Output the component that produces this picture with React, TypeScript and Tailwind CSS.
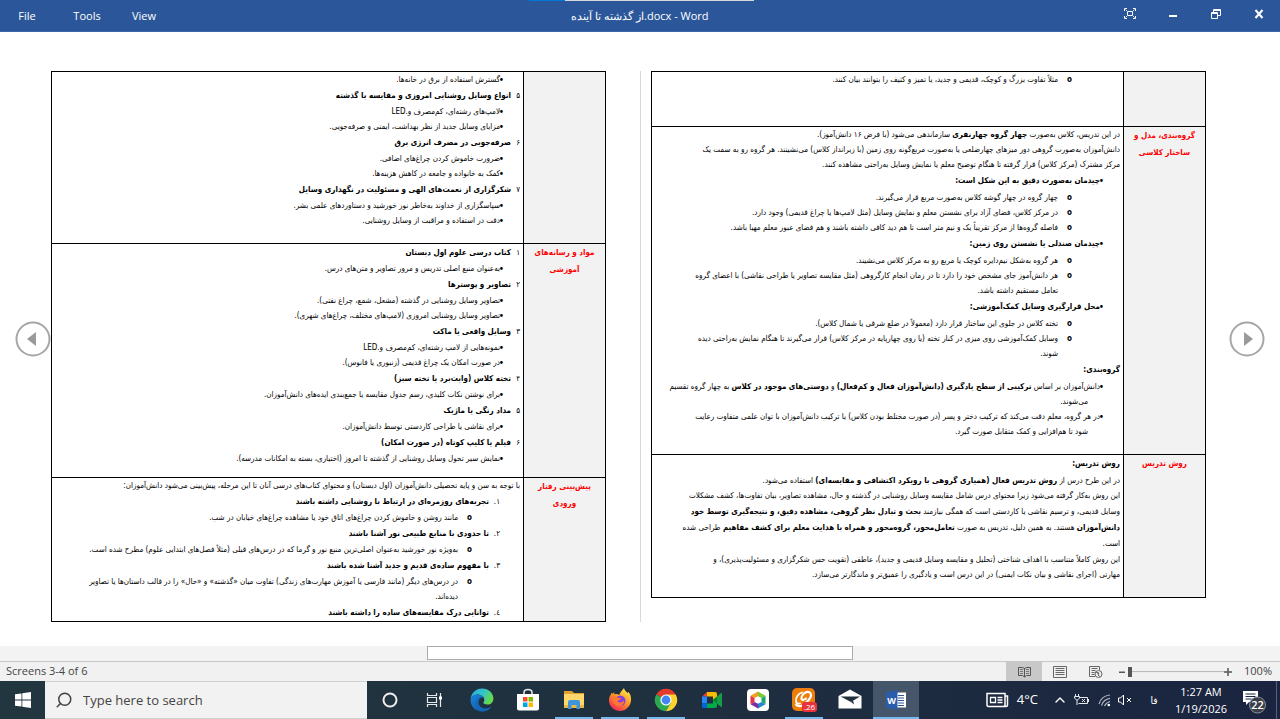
import React from 'react';
import { ChevronUp, Search } from 'lucide-react';

type Kind = 'text' | 'head' | 'number' | 'bullet' | 'circle' | 'ordered';

interface Line {
  kind: Kind;
  marker?: string;
  body: React.ReactNode;
  bold?: boolean;
  loose?: boolean;
}

interface Section {
  title: string[];
  lines: Line[];
  pad: string;
}

const head = (body: React.ReactNode): Line => ({ kind: 'head', body, bold: true });
const text = (body: React.ReactNode, loose = false): Line => ({ kind: 'text', body, loose });
const num = (marker: string, body: React.ReactNode): Line => ({ kind: 'number', marker, body, bold: true });
const ordered = (marker: string, body: React.ReactNode): Line => ({ kind: 'ordered', marker, body, bold: true });
const bullet = (body: React.ReactNode, bold = false): Line => ({ kind: 'bullet', marker: '•', body, bold });
const circle = (body: React.ReactNode): Line => ({ kind: 'circle', marker: 'o', body });

const leftPage: Section[] = [
  {
    title: [],
    pad: 'pb-[15px]',
    lines: [
      bullet('گسترش استفاده از برق در خانه‌ها.'),
      num('۵', 'انواع وسایل روشنایی امروزی و مقایسه با گذشته'),
      bullet('لامپ‌های رشته‌ای، کم‌مصرف و.LED'),
      bullet('مزایای وسایل جدید از نظر بهداشت، ایمنی و صرفه‌جویی.'),
      num('۶', 'صرفه‌جویی در مصرف انرژی برق'),
      bullet('ضرورت خاموش کردن چراغ‌های اضافی.'),
      bullet('کمک به خانواده و جامعه در کاهش هزینه‌ها.'),
      num('۷', 'شکرگزاری از نعمت‌های الهی و مسئولیت در نگهداری وسایل'),
      bullet('سپاسگزاری از خداوند به‌خاطر نور خورشید و دستاوردهای علمی بشر.'),
      bullet('دقت در استفاده و مراقبت از وسایل روشنایی.'),
    ],
  },
  {
    title: ['مواد و رسانه‌های', 'آموزشی'],
    pad: 'pb-[11px]',
    lines: [
      num('۱', 'کتاب درسی علوم اول دبستان'),
      bullet('به‌عنوان منبع اصلی تدریس و مرور تصاویر و متن‌های درس.'),
      num('۲', 'تصاویر و پوسترها'),
      bullet('تصاویر وسایل روشنایی در گذشته (مشعل، شمع، چراغ نفتی).'),
      bullet('تصاویر وسایل روشنایی امروزی (لامپ‌های مختلف، چراغ‌های شهری).'),
      num('۳', 'وسایل واقعی یا ماکت'),
      bullet('نمونه‌هایی از لامپ رشته‌ای، کم‌مصرف و.LED'),
      bullet('در صورت امکان یک چراغ قدیمی (زنبوری یا فانوس).'),
      num('۴', 'تخته کلاس (وایت‌برد یا تخته سبز)'),
      bullet('برای نوشتن نکات کلیدی، رسم جدول مقایسه یا جمع‌بندی ایده‌های دانش‌آموزان.'),
      num('۵', 'مداد رنگی یا ماژیک'),
      bullet('برای نقاشی یا طراحی کاردستی توسط دانش‌آموزان.'),
      num('۶', 'فیلم یا کلیپ کوتاه (در صورت امکان)'),
      bullet('نمایش سیر تحول وسایل روشنایی از گذشته تا امروز (اختیاری، بسته به امکانات مدرسه).'),
    ],
  },
  {
    title: ['پیش‌بینی رفتار', 'ورودی'],
    pad: 'pb-0',
    lines: [
      text('با توجه به سن و پایه تحصیلی دانش‌آموزان (اول دبستان) و محتوای کتاب‌های درسی آنان تا این مرحله، پیش‌بینی می‌شود دانش‌آموزان:'),
      ordered('۱.', 'تجربه‌های روزمره‌ای در ارتباط با روشنایی داشته باشند'),
      circle('مانند روشن و خاموش کردن چراغ‌های اتاق خود یا مشاهده چراغ‌های خیابان در شب.'),
      ordered('۲.', 'تا حدودی با منابع طبیعی نور آشنا باشند'),
      circle('به‌ویژه نور خورشید به‌عنوان اصلی‌ترین منبع نور و گرما که در درس‌های قبلی (مثلاً فصل‌های ابتدایی علوم) مطرح شده است.'),
      ordered('۳.', 'با مفهوم ساده‌ی قدیم و جدید آشنا شده باشند'),
      circle(<>در درس‌های دیگر (مانند فارسی یا آموزش مهارت‌های زندگی) تفاوت میان «گذشته» و «حال» را در قالب داستان‌ها یا تصاویر<br />دیده‌اند.</>),
      ordered('٤.', 'توانایی درک مقایسه‌های ساده را داشته باشند'),
    ],
  },
];

const rightPage: Section[] = [
  {
    title: [],
    pad: 'pb-[39px]',
    lines: [circle('مثلاً تفاوت بزرگ و کوچک، قدیمی و جدید، یا تمیز و کثیف را بتوانند بیان کنند.')],
  },
  {
    title: ['گروه‌بندی، مدل و', 'ساختار کلاسی'],
    pad: 'pb-[15px]',
    lines: [
      text(<>در این تدریس، کلاس به‌صورت <b>چهار گروه چهارنفری</b> سازماندهی می‌شود (با فرض ۱۶ دانش‌آموز).</>),
      text(<>دانش‌آموزان به‌صورت گروهی دور میزهای چهارضلعی یا به‌صورت مربع‌گونه روی زمین (با زیرانداز کلاس) می‌نشینند. هر گروه رو به سمت یک<br />مرکز مشترک (مرکز کلاس) قرار گرفته تا هنگام توضیح معلم یا نمایش وسایل به‌راحتی مشاهده کنند.</>),
      bullet('چیدمان به‌صورت دقیق به این شکل است:', true),
      circle('چهار گروه در چهار گوشه کلاس به‌صورت مربع قرار می‌گیرند.'),
      circle('در مرکز کلاس، فضای آزاد برای نشستن معلم و نمایش وسایل (مثل لامپ‌ها یا چراغ قدیمی) وجود دارد.'),
      circle('فاصله گروه‌ها از مرکز تقریباً یک و نیم متر است تا هم دید کافی داشته باشند و هم فضای عبور معلم مهیا باشد.'),
      bullet('چیدمان صندلی یا نشستن روی زمین:', true),
      circle('هر گروه به‌شکل نیم‌دایره کوچک یا مربع رو به مرکز کلاس می‌نشیند.'),
      circle(<>هر دانش‌آموز جای مشخص خود را دارد تا در زمان انجام کارگروهی (مثل مقایسه تصاویر یا طراحی نقاشی) با اعضای گروه<br />تعامل مستقیم داشته باشد.</>),
      bullet('محل قرارگیری وسایل کمک‌آموزشی:', true),
      circle('تخته کلاس در جلوی این ساختار قرار دارد (معمولاً در ضلع شرقی یا شمال کلاس).'),
      circle(<>وسایل کمک‌آموزشی روی میزی در کنار تخته (یا روی چهارپایه در مرکز کلاس) قرار می‌گیرند تا هنگام نمایش به‌راحتی دیده<br />شوند.</>),
      head('گروه‌بندی:'),
      bullet(<>دانش‌آموزان بر اساس <b>ترکیبی از سطح یادگیری (دانش‌آموزان فعال و کم‌فعال)</b> و <b>دوستی‌های موجود در کلاس</b> به چهار گروه تقسیم<br /><span className="pe-3" />می‌شوند.</>),
      bullet(<>در هر گروه، معلم دقت می‌کند که ترکیب دختر و پسر (در صورت مختلط بودن کلاس) یا ترکیب دانش‌آموزان با توان علمی متفاوت رعایت<br /><span className="pe-3" />شود تا هم‌افزایی و کمک متقابل صورت گیرد.</>),
    ],
  },
  {
    title: ['روش تدریس'],
    pad: 'pb-[15px]',
    lines: [
      head('روش تدریس:'),
      text(<>در این طرح درس از <b>روش تدریس فعال (همیاری گروهی با رویکرد اکتشافی و مقایسه‌ای)</b> استفاده می‌شود.</>),
      text(<>این روش به‌کار گرفته می‌شود زیرا محتوای درس شامل مقایسه وسایل روشنایی در گذشته و حال، مشاهده تصاویر، بیان تفاوت‌ها، کشف مشکلات<br />وسایل قدیمی، و ترسیم نقاشی یا کاردستی است که همگی نیازمند <b>بحث و تبادل نظر گروهی، مشاهده دقیق، و نتیجه‌گیری توسط خود<br />دانش‌آموزان</b> هستند. به همین دلیل، تدریس به صورت <b>تعامل‌محور، گروه‌محور و همراه با هدایت معلم برای کشف مفاهیم</b> طراحی شده<br />است.</>, true),
      text(<>این روش کاملاً متناسب با اهداف شناختی (تحلیل و مقایسه وسایل قدیمی و جدید)، عاطفی (تقویت حس شکرگزاری و مسئولیت‌پذیری)، و<br />مهارتی (اجرای نقاشی و بیان نکات ایمنی) در این درس است و یادگیری را عمیق‌تر و ماندگارتر می‌سازد.</>),
    ],
  },
];

const indent: Record<Kind, string> = {
  text: '',
  head: '',
  number: '',
  bullet: 'ps-4',
  ordered: 'ps-5',
  circle: 'ps-12',
};

const markerStyle: Record<Kind, string> = {
  text: 'hidden',
  head: 'hidden',
  number: 'w-[9px] font-normal',
  bullet: 'w-1 text-[10px] font-normal',
  ordered: 'w-[11px] font-normal text-[8px]',
  circle: 'w-[14px] text-[8px] font-bold',
};

const DocLine: React.FC<{ line: Line; headLeading: string }> = ({ line, headLeading }) => {
  const leading = line.bold ? headLeading : line.loose ? 'leading-[16px]' : 'leading-[15px]';
  return (
    <div className={`flex whitespace-nowrap ${indent[line.kind]} ${leading} ${line.bold ? 'font-bold' : ''}`}>
      <span className={`shrink-0 ${markerStyle[line.kind]} ${leading}`}>{line.marker}</span>
      <p>{line.body}</p>
    </div>
  );
};

const Page: React.FC<{ sections: Section[]; headLeading: string }> = ({ sections, headLeading }) => (
  <table
    dir="rtl"
    className="w-full table-fixed border-collapse border border-black font-['DejaVu_Sans_Condensed','DejaVu_Sans',sans-serif] text-[8px] text-black"
  >
    <colgroup>
      <col className="w-[82px]" />
      <col />
    </colgroup>
    <tbody>
      {sections.map((s, i) => (
        <tr key={i}>
          <th className="border border-black bg-[#f2f2f2] p-0 text-center align-top text-[8px] leading-[17px] font-bold text-[#ff0000]">
            {s.title.map(t => <div key={t}>{t}</div>)}
          </th>
          <td className={`border border-black p-0 ps-[3px] align-top ${s.pad}`}>
            {s.lines.map((l, j) => <DocLine key={j} line={l} headLeading={headLeading} />)}
          </td>
        </tr>
      ))}
    </tbody>
  </table>
);

const PageButton: React.FC<{ label: string; d: string }> = ({ label, d }) => (
  <button aria-label={label} className="shrink-0 self-center">
    <svg width="36" height="36" viewBox="0 0 36 36">
      <circle cx="18" cy="18" r="16.5" fill="#fff" stroke="#a6a6a6" strokeWidth="2" />
      <path d={d} fill="#9a9a9a" />
    </svg>
  </button>
);

const TitleBar = () => (
  <header className="grid h-8 shrink-0 grid-cols-[1fr_auto_1fr] items-center border-b border-[#3f68a8] bg-[#2b579a] font-['Open_Sans',sans-serif] text-[11px] text-white">
    <nav className="flex h-full items-center pt-px">
      <button className="w-[54px] text-center">File</button>
      <button className="w-[66px] text-center">Tools</button>
      <button className="w-12 text-center">View</button>
    </nav>
    <div className="relative flex h-full items-center pt-px">
      <div className="absolute top-0 -left-[42px] flex h-px w-[225px]">
        <span className="w-9 shrink-0 bg-[#0078d7]" />
        <span className="w-full bg-[#d5d9df]" />
      </div>
      <h1 dir="ltr"><bdi>از گذشته تا آینده</bdi>.docx - Word</h1>
    </div>
    <div className="flex h-full items-center justify-end pb-1">
      <button aria-label="Auto-hide reading toolbar" className="flex w-[43px] justify-center">
        <svg width="12" height="11" viewBox="0 0 12 11" fill="none" stroke="#fff">
          <path d="M.5 3V.5H3M9 .5h2.500V3M11.500 8v2.500H9M3 10.500H.5V8M3.500 3.500h5v4h-5z" />
          <path d="M1.500 1.500l1.500 1.500M10.500 1.500L9 3M1.500 9.500L3 8M10.500 9.500L9 8" strokeWidth=".8" />
        </svg>
      </button>
      <button aria-label="Minimize" className="flex w-[43px] justify-center">
        <svg width="10" height="10" viewBox="0 0 10 10"><path d="M1 6h8v2H1z" fill="#fff" /></svg>
      </button>
      <button aria-label="Restore" className="flex w-[43px] justify-center">
        <svg width="10" height="10" viewBox="0 0 10 10" fill="none" stroke="#fff">
          <path d="M.5 3.500h6v6h-6zM.5 4.500h6M2.500 3V.5h7v6H7M2.500 1.500h7" />
        </svg>
      </button>
      <button aria-label="Close" className="flex w-[43px] justify-center">
        <svg width="10" height="10" viewBox="0 0 10 10"><path d="M1.500 1l7 8M8.500 1l-7 8" stroke="#fff" strokeWidth="2" /></svg>
      </button>
    </div>
  </header>
);

const StatusBar = () => (
  <footer className="flex h-5 shrink-0 items-center border-t border-[#c6c6c6] bg-[#f1f1f1] font-['Open_Sans',sans-serif] text-[11px] text-[#444]">
    <span className="flex-1 ps-[6px]">Screens 3-4 of 6</span>
    <button aria-label="Read mode" className="flex h-full w-9 items-center justify-center bg-[#c8c8c8]">
      <svg width="13" height="12" viewBox="0 0 13 12" fill="none" stroke="#555">
        <path d="M.5 1.500h4l2 1 2-1h4v8h-4l-2 1.500-2-1.500h-4zM6.500 2v9" />
        <path d="M2 3.500h3M2 5.500h3M2 7.500h3M8 3.500h3M8 5.500h3M8 7.500h3" stroke="#777" />
      </svg>
    </button>
    <button aria-label="Print layout" className="flex h-full w-9 items-center justify-center">
      <svg width="14" height="12" viewBox="0 0 14 12" fill="none" stroke="#666">
        <path d="M.5.5h13v11H.5zM2.500 2.500h9M2.500 4.500h9M2.500 6.500h9M2.500 8.500h9" />
      </svg>
    </button>
    <button aria-label="Web layout" className="flex h-full w-9 items-center justify-center">
      <svg width="14" height="12" viewBox="0 0 14 12" fill="none" stroke="#666">
        <path d="M6 10.500H.5V.5h10V4M2.500 2.500h6M2.500 4.500h4M2.500 6.500h3M2.500 8.500h3" />
        <circle cx="9.500" cy="8" r="3.500" fill="#f1f1f1" />
        <path d="M7 6l3 1-1 2 2 1.500" fill="#777" />
      </svg>
    </button>
    <div className="flex items-center ps-1">
      <button aria-label="Zoom out" className="flex w-2 justify-center">
        <svg width="7" height="8" viewBox="0 0 7 8"><path d="M0 3.500h6v1.500H0z" fill="#555" /></svg>
      </button>
      <input
        type="range"
        aria-label="Zoom"
        min={100}
        max={300}
        defaultValue={100}
        className="ms-[2px] h-3 w-24 appearance-none bg-linear-to-b from-transparent from-45% via-[#b5b5b5] via-45% to-transparent to-55% [&::-webkit-slider-thumb]:h-[10px] [&::-webkit-slider-thumb]:w-1 [&::-webkit-slider-thumb]:appearance-none [&::-webkit-slider-thumb]:bg-[#555]"
      />
      <button aria-label="Zoom in" className="flex w-2 justify-center">
        <svg width="8" height="8" viewBox="0 0 8 8"><path d="M0 4h8M4 0v8" stroke="#555" strokeWidth="1.500" /></svg>
      </button>
    </div>
    <span className="w-12 pe-2 text-right">100%</span>
  </footer>
);

const icons: { name: string; open?: boolean; active?: boolean; icon: React.ReactNode }[] = [
  {
    name: 'Edge',
    icon: (
      <svg width="24" height="24" viewBox="0 0 24 24">
        <defs>
          <linearGradient id="edgeTop" x1="0" y1="0" x2="1" y2=".4">
            <stop offset="0" stopColor="#2ba7e6" />
            <stop offset=".6" stopColor="#36c6c4" />
            <stop offset="1" stopColor="#66d94c" />
          </linearGradient>
          <linearGradient id="edgeLow" x1="0" y1="0" x2="1" y2="1">
            <stop offset="0" stopColor="#1a86dc" />
            <stop offset="1" stopColor="#0c4d9c" />
          </linearGradient>
        </defs>
        <path d="M.6 11C1.200 4.800 6 .6 12 .6c6.700 0 11.400 4.900 11.400 9.800 0 3.700-2.700 6.100-6 6.100-2.800 0-4.300-1.100-4-2 .3-.6.900-1.200.9-2.700 0-2.900-3-5.300-6.800-5.300C4 6.500 1.300 8.700.6 11z" fill="url(#edgeTop)" />
        <path d="M.6 11C1.400 8.300 4.300 6.600 7.300 6.600c3 0 5.200 1.200 6.300 3-2.600-.8-5.300 1.300-5.300 4.700 0 3.600 3.300 6.400 7 6.400 2.300 0 4.200-.6 6.100-2.100-2 3-5.600 4.900-9.300 4.900C5.300 23.500 0 18 .6 11z" fill="url(#edgeLow)" />
        <path d="M8.300 14.300c0 3.600 3.300 6.400 7 6.400 2.300 0 4.200-.6 6.100-2.100-2.800 4.500-6.600 4.900-9.300 4.900-4.200-.6-6.500-4.500-6.100-8.300.3-3.100 2.500-5.700 5.700-6.100-2 .7-3.400 2.600-3.400 5.200z" fill="#1466b8" />
      </svg>
    ),
  },
  {
    name: 'Microsoft Store',
    icon: (
      <svg width="24" height="24" viewBox="0 0 24 24">
        <path d="M8 7V4.500C8 2.500 9.500 1.500 12 1.500s4 1 4 3V7" fill="none" stroke="#e8ecef" strokeWidth="1.500" />
        <path d="M1 6h22v14.500a2 2 0 0 1-2 2H3a2 2 0 0 1-2-2z" fill="#fff" />
        <path d="M7 9h4.500v4.500H7z" fill="#f25022" /><path d="M12.500 9H17v4.500h-4.500z" fill="#7fba00" />
        <path d="M7 14.500h4.500V19H7z" fill="#00a4ef" /><path d="M12.500 14.500H17V19h-4.500z" fill="#ffb900" />
      </svg>
    ),
  },
  {
    name: 'File Explorer',
    open: true,
    icon: (
      <svg width="24" height="24" viewBox="0 0 24 24">
        <path d="M2 3h8l2 2h10v5H2z" fill="#e0a030" />
        <path d="M2 6h20v14H2z" fill="#ffd76a" />
        <path d="M2 17h20v3H2z" fill="#eab646" />
        <path d="M6 21v-7a2 2 0 0 1 2-2h8a2 2 0 0 1 2 2v7h-3.500v-4h-5v4z" fill="#3e95dc" />
      </svg>
    ),
  },
  {
    name: 'Firefox',
    open: true,
    icon: (
      <svg width="24" height="24" viewBox="0 0 24 24">
        <defs>
          <linearGradient id="fox" x1=".8" y1="0" x2=".2" y2="1">
            <stop offset="0" stopColor="#fff04a" />
            <stop offset=".45" stopColor="#ff9a26" />
            <stop offset="1" stopColor="#f0205c" />
          </linearGradient>
        </defs>
        <path d="M16 0c.5 2.500 2.500 3.600 3.600 5 .6-.2.700-.7.700-1.200C22.300 6 23.300 9 23.100 12c-.4 6.300-5.300 11-11.200 11C5.800 23 1 18.300 1 12.300 1 9.500 1.900 7.600 3 6.200V4.800c.7.300 1 .9 1.300 1.300C5 5.300 5.500 4.700 6.300 4.200c-.2.900 0 1.700.3 2.200 1.800-.6 3.500-.2 4.600.6C12 4.600 13.800 2.700 16 0z" fill="url(#fox)" />
        <circle cx="12.300" cy="12.800" r="5.200" fill="#8a3de0" />
        <path d="M4.500 9c2-1 3.600-.3 5 .4 1.500.6 2.800.3 3.500.8-.4 1.500-2.600 1.800-3.500 3.200 2 2 5.400.8 6.400-1.200.7 4-2.400 6.400-5.600 5.900C6.300 17.400 4 13.500 4.500 9z" fill="#ff7730" />
      </svg>
    ),
  },
  {
    name: 'Chrome',
    open: true,
    icon: (
      <svg width="24" height="24" viewBox="0 0 24 24">
        <path d="M12 12L2.300 6.400A11.200 11.200 0 0 1 21.700 6.400z" fill="#e33b2e" />
        <path d="M2.300 6.400A11.200 11.200 0 0 0 12 23.200L16.900 14.800 12 12z" fill="#2da94f" />
        <path d="M21.700 6.400A11.200 11.200 0 0 1 12 23.200l4.900-8.400L12 6.400z" fill="#fdd22f" />
        <circle cx="12" cy="12" r="5.600" fill="#fff" />
        <circle cx="12" cy="12" r="4.400" fill="#4285f4" />
      </svg>
    ),
  },
  {
    name: 'Google Meet',
    icon: (
      <svg width="24" height="24" viewBox="0 0 24 24">
        <path d="M7 4h8a2 2 0 0 1 2 2v5l-4 1V8.500H7z" fill="#fbbc04" />
        <path d="M2 8.500L7 4v4.500z" fill="#ea4335" />
        <path d="M2 8.500h5v7H2z" fill="#2684fc" />
        <path d="M2 15.500h5V20H3.500A1.500 1.500 0 0 1 2 18.500z" fill="#0066da" />
        <path d="M7 15.500h6V12l4 2v4a2 2 0 0 1-2 2H7z" fill="#00ac47" />
        <path d="M13 12l8-7c.5-.4 1 0 1 .4v13.200c0 .5-.5.800-1 .4z" fill="#169c46" />
        <path d="M13 12l4-3.500v7z" fill="#00832d" />
      </svg>
    ),
  },
  {
    name: 'Rubika',
    icon: (
      <svg width="24" height="24" viewBox="0 0 24 24">
        <rect x="1" y="1" width="22" height="22" rx="4" fill="#fff" />
        <path d="M12 3.500l-7.500 4.300L8.500 10 12 8.300z" fill="#f0a020" />
        <path d="M12 3.500l7.500 4.300L15.500 10 12 8.300z" fill="#7ec832" />
        <path d="M4.500 7.800v8.400L8.500 14v-4z" fill="#e83048" />
        <path d="M19.500 7.800v8.400L15.500 14v-4z" fill="#18a86a" />
        <path d="M4.500 16.200L12 20.500v-4.800L8.500 14z" fill="#7a2f9c" />
        <path d="M19.500 16.200L12 20.500v-4.800L15.500 14z" fill="#2584cf" />
      </svg>
    ),
  },
  {
    name: 'Eitaa',
    open: true,
    icon: (
      <svg width="26" height="26" viewBox="0 0 26 26">
        <rect x="1" y="1" width="23" height="23" rx="5" fill="#ef7d0b" />
        <path d="M5 17.500c2 2.500 5.500 2 8 0s6.500-5.500 7-9C20.300 5.500 17 4 14.500 5.500c-2.500 1.500-4.500 4.500-4 6.500.5 1.500 2.800 1 4.500-.5" fill="none" stroke="#fff" strokeWidth="2.200" strokeLinecap="round" />
        <path d="M11 5.500C7.500 6.500 4.500 10.500 5 14c.3 2 2 3 4 2.500" fill="none" stroke="#fff" strokeWidth="1.800" strokeLinecap="round" />
        <rect x="11" y="15" width="15" height="10" rx="3" fill="#e8323c" />
        <text x="18.500" y="23" textAnchor="middle" fill="#fff" fontSize="8" fontFamily="Open Sans, sans-serif">.26</text>
      </svg>
    ),
  },
  {
    name: 'Mail',
    icon: (
      <svg width="24" height="24" viewBox="0 0 24 24">
        <path d="M.5 8L12 1.500 23.500 8v12.500H.5z" fill="#fff" />
        <path d="M2.500 8.500h19.500L13 14z" fill="#20313c" />
        <path d="M13 14l3 2.500-1-4z" fill="#20313c" />
      </svg>
    ),
  },
  {
    name: 'Word',
    open: true,
    active: true,
    icon: (
      <svg width="22" height="20" viewBox="0 0 22 20">
        <path d="M11 2.500h10v15H11z" fill="#fff" />
        <path d="M13 5.500h6M13 8h6M13 10.500h6M13 13h6M13 15.500h6" stroke="#2b579a" />
        <path d="M1 2.500L12.500 0v20L1 17.500z" fill="#2b5cab" />
        <text x="6.500" y="13.500" textAnchor="middle" fill="#fff" fontSize="9" fontWeight="700" fontFamily="Open Sans, sans-serif">W</text>
      </svg>
    ),
  },
];

const Taskbar = () => (
  <div className="flex h-[38px] shrink-0 items-stretch bg-linear-to-r from-[#21363e] via-[#1f303f] to-[#1a2440] font-['Open_Sans',sans-serif] text-white">
    <button aria-label="Start" className="flex w-[45px] items-center justify-center">
      <svg width="16" height="16" viewBox="0 0 16 16" fill="#fff">
        <path d="M0 2.300l6.500-.9v6.200H0zM7.300 1.300L16 0v7.600H7.300zM0 8.400h6.500v6.200L0 13.700zM7.300 8.400H16V16l-8.700-1.300z" />
      </svg>
    </button>
    <label className="flex w-[322px] items-center border-y border-[#d0d0d0] bg-[#f2f2f2] ps-[10px] text-[#444]">
      <Search className="h-[18px] w-[18px] shrink-0 -scale-x-100" strokeWidth={2} />
      <input
        aria-label="Type here to search"
        placeholder="Type here to search"
        className="w-full bg-transparent ps-[10px] pt-px text-[13px] outline-none placeholder:text-[#444]"
      />
    </label>
    <button aria-label="Cortana" className="flex w-[46px] items-center justify-center">
      <svg width="16" height="16" viewBox="0 0 16 16"><circle cx="8" cy="8" r="6.500" fill="none" stroke="#eee" strokeWidth="2" /></svg>
    </button>
    <button aria-label="Task view" className="flex w-[46px] items-center justify-center pe-1">
      <svg width="16" height="16" viewBox="0 0 16 16" fill="none" stroke="#e6e9eb">
        <path d="M1.500 1v2.500h9V1M1.500 5.500h9v5h-9zM1.500 15v-2.500h9V15M14.500 1v4M14.500 7v8" strokeWidth="1.200" />
        <path d="M13 4.500h3v3h-3z" fill="#fff" stroke="none" />
      </svg>
    </button>
    {icons.map(a => (
      <button
        key={a.name}
        aria-label={a.name}
        className={`relative flex w-[46px] items-center justify-center ${a.active ? 'bg-[#46566a]' : ''}`}
      >
        {a.icon}
        {a.open && <span className={`absolute bottom-0 h-[2px] bg-[#76b9ed] ${a.active ? 'inset-x-0' : 'inset-x-1'}`} />}
      </button>
    ))}
    <div className="ms-auto flex items-center">
      <button className="flex items-center gap-2 text-[13px]">
        <svg width="23" height="16" viewBox="0 0 23 16" fill="none" stroke="#fff">
          <path d="M1 1.500h18v13H2.500A1.500 1.500 0 0 1 1 13zM19 4h2.500v9a1.500 1.500 0 0 1-3 0" strokeWidth="1.500" />
          <path d="M4.500 5.500h5v5h-5zM11.500 5.500h5M11.500 8h5M11.500 10.500h5" strokeWidth="1.300" />
        </svg>
        4°C
      </button>
      <button aria-label="Show hidden icons" className="ms-[14px]"><ChevronUp className="h-4 w-4" strokeWidth={2} /></button>
      <button aria-label="Battery" className="ms-[6px]">
        <svg width="16" height="12" viewBox="0 0 16 12" fill="none" stroke="#e8eaf0">
          <path d="M5.500 3.500h8v6H4.500M14.500 5v3M8 5l3 3M11 5L8 8M1.500 0v2M4.500 0v2M.5 2.500h5v1.500L3.500 6h-1L.5 4zM3 6v5" />
        </svg>
      </button>
      <button aria-label="Wi-Fi" className="ms-2">
        <svg width="14" height="13" viewBox="0 0 14 13" fill="none" stroke="#aeb4c2" strokeWidth="1.200">
          <path d="M1 10C2.500 5 6.500 1.500 12 1M3.500 11.500C4.500 8 7.500 5 12 4.300M6.500 12C7.500 10 9.200 8.200 12 7.500" />
          <circle cx="10.800" cy="11" r="1.300" fill="#fff" stroke="none" />
        </svg>
      </button>
      <button aria-label="Volume" className="ms-[6px]">
        <svg width="14" height="12" viewBox="0 0 14 12" fill="none" stroke="#fff">
          <path d="M.5 4h2L5.500 1v10L2.500 8h-2zM9 4l4 4M13 4L9 8" />
        </svg>
      </button>
      <button className="ms-3 w-5 text-center font-['DejaVu_Sans_Condensed',sans-serif] text-[10px]">فا</button>
      <button className="ms-2 w-[58px] text-center text-[11px] leading-[17px]">
        <div>1:27 AM</div>
        <div>1/19/2026</div>
      </button>
      <button aria-label="Notifications" className="ms-3 me-2 pt-1">
        <svg width="26" height="24" viewBox="0 0 26 24">
          <path d="M1 1h15v11H7l-3 3v-3H1z" fill="#fff" />
          <path d="M3.500 4h10M3.500 6.500h10M3.500 9h6" stroke="#1a2440" />
          <circle cx="15.500" cy="15" r="8" fill="#3a3f4a" stroke="#8a8f99" />
          <text x="15.500" y="19" textAnchor="middle" fill="#fff" fontSize="11" fontWeight="600" fontFamily="Open Sans, sans-serif">22</text>
        </svg>
      </button>
      <span className="h-[38px] w-1 border-s border-[#56607a]" />
    </div>
  </div>
);

const App: React.FC = () => {
  return (
    <div className="flex min-h-screen flex-col bg-white">
      <TitleBar />
      <main className="flex flex-1 px-[15px]">
        <PageButton label="Previous screen" d="M12 18l9-7v14z" />
        <div className="flex-1 pt-[39px]">
          <Page sections={leftPage} headLeading="leading-[17px]" />
        </div>
        <div className="ms-[34px] me-[10px] mt-[39px] mb-6 w-px bg-[#d9d9d9]" />
        <div className="me-[23px] flex-1 pt-[39px]">
          <Page sections={rightPage} headLeading="leading-[18px]" />
        </div>
        <PageButton label="Next screen" d="M24 18l-9-7v14z" />
      </main>
      <div className="flex h-[15px] shrink-0 justify-center bg-[#f3f3f3]">
        <div className="h-[14px] w-1/3 border border-[#ababab] bg-white" />
      </div>
      <StatusBar />
      <Taskbar />
    </div>
  );
};

export default App;
